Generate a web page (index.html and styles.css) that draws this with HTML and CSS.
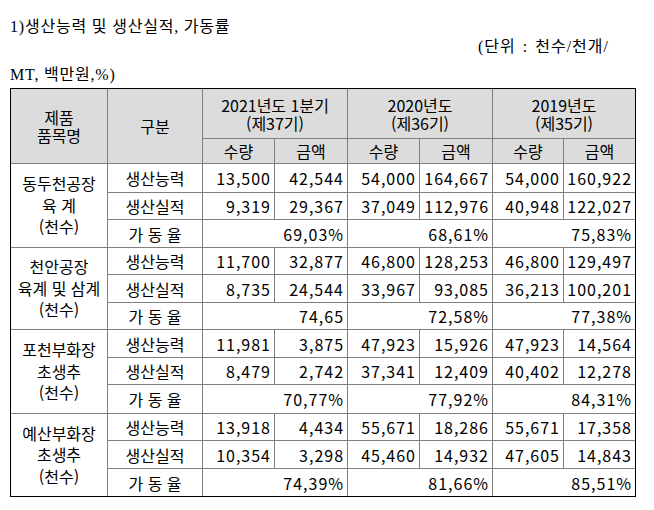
FILE: index.html
```html
<!DOCTYPE html>
<html lang="ko">
<head>
<meta charset="utf-8">
<link rel="stylesheet" href="styles.css">
</head>
<body>
<div class="page">
  <div class="title">1)생산능력 및 생산실적, 가동률</div>
  <div class="unit">(단위 : 천수/천개/</div>
  <div class="unit2">MT, 백만원,%)</div>
  <div class="frame">
    <table class="grid">
      <colgroup>
        <col class="c97"><col class="c95"><col class="c72"><col class="c73"><col class="c72"><col class="c73"><col class="c71"><col class="c72">
      </colgroup>
      <thead>
        <tr class="h1">
          <th rowspan="2" class="hd">제품<br>품목명</th>
          <th rowspan="2" class="hd">구분</th>
          <th colspan="2" class="hd">2021년도 1분기<br>(제37기)</th>
          <th colspan="2" class="hd">2020년도<br>(제36기)</th>
          <th colspan="2" class="hd">2019년도<br>(제35기)</th>
        </tr>
        <tr class="h2">
          <th class="hd">수량</th><th class="hd">금액</th>
          <th class="hd">수량</th><th class="hd">금액</th>
          <th class="hd">수량</th><th class="hd">금액</th>
        </tr>
      </thead>
      <tbody>
        <tr class="r29">
          <td rowspan="3" class="grp">동두천공장<br>육 계<br>(천수)</td>
          <td class="lbl">생산능력</td>
          <td class="n">13,500</td><td class="n">42,544</td>
          <td class="n">54,000</td><td class="n">164,667</td>
          <td class="n">54,000</td><td class="n">160,922</td>
        </tr>
        <tr class="r27">
          <td class="lbl">생산실적</td>
          <td class="n">9,319</td><td class="n">29,367</td>
          <td class="n">37,049</td><td class="n">112,976</td>
          <td class="n">40,948</td><td class="n">122,027</td>
        </tr>
        <tr class="r28">
          <td class="lbl">가 동 율</td>
          <td colspan="2" class="n">69,03%</td>
          <td colspan="2" class="n">68,61%</td>
          <td colspan="2" class="n">75,83%</td>
        </tr>
        <tr class="r27">
          <td rowspan="3" class="grp">천안공장<br>육계 및 삼계<br>(천수)</td>
          <td class="lbl">생산능력</td>
          <td class="n">11,700</td><td class="n">32,877</td>
          <td class="n">46,800</td><td class="n">128,253</td>
          <td class="n">46,800</td><td class="n">129,497</td>
        </tr>
        <tr class="r28">
          <td class="lbl">생산실적</td>
          <td class="n">8,735</td><td class="n">24,544</td>
          <td class="n">33,967</td><td class="n">93,085</td>
          <td class="n">36,213</td><td class="n">100,201</td>
        </tr>
        <tr class="r27">
          <td class="lbl">가 동 율</td>
          <td colspan="2" class="n">74,65</td>
          <td colspan="2" class="n">72,58%</td>
          <td colspan="2" class="n">77,38%</td>
        </tr>
        <tr class="r28">
          <td rowspan="3" class="grp">포천부화장<br>초생추<br>(천수)</td>
          <td class="lbl">생산능력</td>
          <td class="n">11,981</td><td class="n">3,875</td>
          <td class="n">47,923</td><td class="n">15,926</td>
          <td class="n">47,923</td><td class="n">14,564</td>
        </tr>
        <tr class="r27">
          <td class="lbl">생산실적</td>
          <td class="n">8,479</td><td class="n">2,742</td>
          <td class="n">37,341</td><td class="n">12,409</td>
          <td class="n">40,402</td><td class="n">12,278</td>
        </tr>
        <tr class="r29">
          <td class="lbl">가 동 율</td>
          <td colspan="2" class="n">70,77%</td>
          <td colspan="2" class="n">77,92%</td>
          <td colspan="2" class="n">84,31%</td>
        </tr>
        <tr class="r27">
          <td rowspan="3" class="grp">예산부화장<br>초생추<br>(천수)</td>
          <td class="lbl">생산능력</td>
          <td class="n">13,918</td><td class="n">4,434</td>
          <td class="n">55,671</td><td class="n">18,286</td>
          <td class="n">55,671</td><td class="n">17,358</td>
        </tr>
        <tr class="r28">
          <td class="lbl">생산실적</td>
          <td class="n">10,354</td><td class="n">3,298</td>
          <td class="n">45,460</td><td class="n">14,932</td>
          <td class="n">47,605</td><td class="n">14,843</td>
        </tr>
        <tr class="r28">
          <td class="lbl">가 동 율</td>
          <td colspan="2" class="n">74,39%</td>
          <td colspan="2" class="n">81,66%</td>
          <td colspan="2" class="n">85,51%</td>
        </tr>
      </tbody>
    </table>
  </div>
</div>
</body>
</html>
```

FILE: styles.css
```css
html, body {
  margin: 0;
  padding: 0;
  background: #ffffff;
}

.page {
  padding: 17px 0 0 10px;
  width: 626px;
  font-family: "Liberation Serif", "Noto Sans CJK KR", serif;
  font-size: 16px;
  color: #000;
}

.title {
  height: 20px;
  line-height: 20px;
  letter-spacing: 0.8px;
}

.unit {
  height: 20px;
  line-height: 20px;
  text-align: right;
  padding-right: 27px;
  letter-spacing: 1px;
  word-spacing: 2px;
}

.unit2 {
  margin-top: 8px;
  height: 20px;
  line-height: 20px;
  letter-spacing: 0.8px;
}

.frame {
  margin-top: 3px;
  width: 624px;
  border: 1px solid #000;
  overflow: hidden;
}

.grid {
  margin: -1px;
  width: 626px;
  table-layout: fixed;
  border-collapse: collapse;
  font-family: "Noto Sans CJK KR", sans-serif;
  font-size: 16px;
}

.c97 { width: 97px; }
.c95 { width: 95px; }
.c72 { width: 72px; }
.c73 { width: 73px; }
.c71 { width: 71px; }

.grid th,
.grid td {
  border: 1px solid #808080;
  padding: 0;
  font-weight: normal;
  vertical-align: middle;
  white-space: nowrap;
}

.hd {
  background: #dcdcdc;
  text-align: center;
  line-height: 18px;
}

.h1 { height: 50px; }
.h2 { height: 25px; }
.r27 { height: 27px; }
.r28 { height: 28px; }
.r29 { height: 29px; }

.grp {
  text-align: center;
  line-height: 21.5px;
}

.lbl {
  text-align: center;
  line-height: 20px;
}

.n {
  text-align: right;
  padding-right: 3px !important;
  letter-spacing: 1px;
  line-height: 20px;
}
```
